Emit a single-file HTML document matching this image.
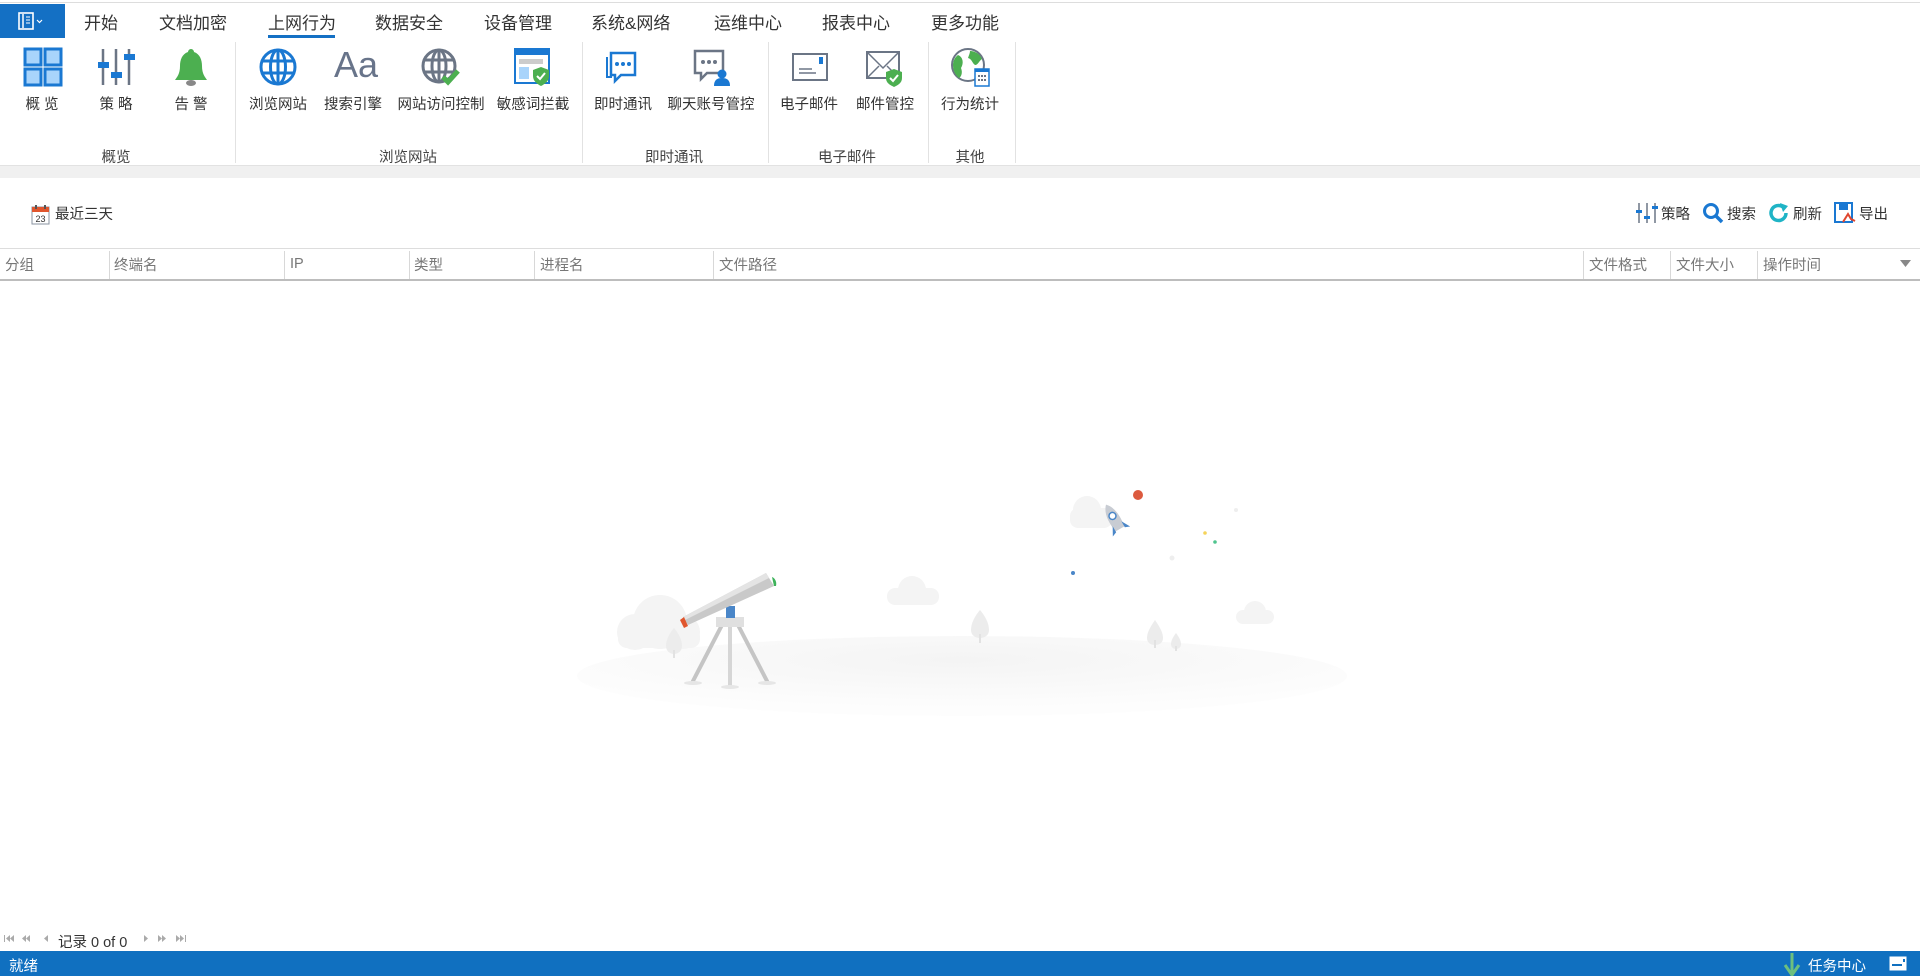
<!DOCTYPE html>
<html><head><meta charset="utf-8"><style>
*{margin:0;padding:0;box-sizing:border-box}
body{width:1920px;height:976px;position:relative;overflow:hidden;background:#fff;font-family:"Liberation Sans","Noto Sans CJK SC",sans-serif;color:#333}
.a{position:absolute;white-space:nowrap}
.tab{position:absolute;top:9px;font-size:17px;color:#333}
.lbl{position:absolute;top:93px;font-size:14.5px;color:#333;transform:translateX(-50%)}
.grp{position:absolute;top:146px;font-size:14.5px;color:#444;transform:translateX(-50%)}
.ic{position:absolute;top:47px;width:40px;height:40px}
.sep{position:absolute;top:42px;width:1px;height:121px;background:#e2e2e2}
.hd{position:absolute;top:254px;font-size:14.5px;color:#777}
.cs{position:absolute;top:251px;width:1px;height:28px;background:#d8d8d8}
.tb{position:absolute;top:203px;font-size:14.5px;color:#333}
</style></head><body>
<div class="a" style="left:0;top:2px;width:1920px;height:1px;background:#ddd"></div>
<div class="a" style="left:0;top:4px;width:65px;height:34px;background:#1470c4"></div>
<svg class="a" style="left:18px;top:12px" width="30" height="18"><rect x="1" y="1" width="14" height="16" fill="none" stroke="#fff" stroke-width="1.6"/><line x1="5" y1="2" x2="5" y2="16" stroke="#fff" stroke-width="1.5"/><line x1="8" y1="5" x2="12" y2="5" stroke="#fff"/><line x1="8" y1="8" x2="12" y2="8" stroke="#fff"/><line x1="8" y1="11" x2="12" y2="11" stroke="#fff"/><path d="M19 8l2.5 2.5L24 8" fill="none" stroke="#fff" stroke-width="1.2"/></svg>
<div class="tab" style="left:84px">开始</div>
<div class="tab" style="left:159px">文档加密</div>
<div class="tab" style="left:268px">上网行为</div>
<div class="a" style="left:268px;top:35px;width:67px;height:3px;background:#1470c4"></div>
<div class="tab" style="left:375px">数据安全</div>
<div class="tab" style="left:484px">设备管理</div>
<div class="tab" style="left:591px">系统&amp;网络</div>
<div class="tab" style="left:714px">运维中心</div>
<div class="tab" style="left:822px">报表中心</div>
<div class="tab" style="left:931px">更多功能</div>

<svg class="ic" style="left:23px" viewBox="0 0 40 40"><g fill="#a9d4fb" stroke="#1a78d2" stroke-width="3"><rect x="2" y="2" width="16" height="16"/><rect x="22" y="2" width="16" height="16"/><rect x="2" y="22" width="16" height="16"/><rect x="22" y="22" width="16" height="16"/></g></svg>
<svg class="ic" style="left:97px" viewBox="0 0 40 40"><g stroke="#6b7585" stroke-width="2.5"><line x1="6" y1="2" x2="6" y2="38"/><line x1="19" y1="2" x2="19" y2="38"/><line x1="32" y1="2" x2="32" y2="38"/></g><g fill="#1a78d2"><rect x="1" y="15" width="11" height="6"/><rect x="14" y="25" width="11" height="6"/><rect x="27" y="7" width="11" height="6"/></g></svg>
<svg class="ic" style="left:171px" viewBox="0 0 40 40"><path d="M20 2c-2 0-3 2-3 3-6 2-8 8-8 14 0 8-3 11-5 14h32c-2-3-5-6-5-14 0-6-2-12-8-14 0-1-1-3-3-3z" fill="#4caf50"/><ellipse cx="20" cy="36" rx="5" ry="3" fill="#888"/></svg>
<svg class="ic" style="left:258px" viewBox="0 0 40 40"><g fill="none" stroke="#1a78d2" stroke-width="3"><circle cx="20" cy="20" r="17"/><ellipse cx="20" cy="20" rx="7.5" ry="17"/><line x1="3" y1="14" x2="37" y2="14"/><line x1="3" y1="26" x2="37" y2="26"/><line x1="20" y1="3" x2="20" y2="37"/></g></svg>
<div class="a" style="left:334px;top:44px;font-size:36px;color:#68748a;font-family:'Liberation Sans',sans-serif">Aa</div>
<svg class="ic" style="left:420px" viewBox="0 0 40 40"><g fill="none" stroke="#6b7585" stroke-width="3"><circle cx="19" cy="19" r="16"/><ellipse cx="19" cy="19" rx="7" ry="16"/><line x1="3" y1="13" x2="35" y2="13"/><line x1="3" y1="25" x2="35" y2="25"/><line x1="19" y1="3" x2="19" y2="35"/></g><path d="M23 30l5 5 10-11" fill="none" stroke="#4caf50" stroke-width="5"/></svg>
<svg class="ic" style="left:513px" viewBox="0 0 40 40"><rect x="2" y="2" width="34" height="34" fill="#fff" stroke="#1a78d2" stroke-width="2"/><rect x="2" y="2" width="34" height="6" fill="#1a78d2"/><rect x="6" y="12" width="24" height="5" fill="#ccc"/><rect x="6" y="20" width="10" height="12" fill="#a9d4fb"/><path d="M28 20l8 3v6c0 5-4 8-8 10-4-2-8-5-8-10v-6z" fill="#4caf50"/><path d="M24 29l3 3 5-6" fill="none" stroke="#fff" stroke-width="2"/></svg>
<svg class="ic" style="left:603px" viewBox="0 0 40 40"><path d="M8 6h24v22H18l-6 6v-6H8z" fill="none" stroke="#1a78d2" stroke-width="2.5"/><path d="M4 10v20h5" fill="none" stroke="#1a78d2" stroke-width="2"/><circle cx="14" cy="17" r="2" fill="#1a78d2"/><circle cx="20" cy="17" r="2" fill="#1a78d2"/><circle cx="26" cy="17" r="2" fill="#1a78d2"/></svg>
<svg class="ic" style="left:691px" viewBox="0 0 40 40"><path d="M4 4h28v22H16l-6 6v-6H4z" fill="none" stroke="#6b7585" stroke-width="2.5"/><circle cx="12" cy="15" r="2" fill="#6b7585"/><circle cx="18" cy="15" r="2" fill="#6b7585"/><circle cx="24" cy="15" r="2" fill="#6b7585"/><circle cx="31" cy="27" r="4.5" fill="#1a78d2"/><path d="M23 39c0-6 3-8 8-8s8 2 8 8z" fill="#1a78d2"/></svg>
<svg class="ic" style="left:790px" viewBox="0 0 40 40"><rect x="3" y="7" width="34" height="26" fill="#fff" stroke="#6b7585" stroke-width="2"/><rect x="29" y="10" width="4" height="7" fill="#1a78d2"/><line x1="9" y1="22" x2="22" y2="22" stroke="#6b7585" stroke-width="1.5"/><line x1="9" y1="26" x2="26" y2="26" stroke="#6b7585" stroke-width="1.5"/></svg>
<svg class="ic" style="left:864px" viewBox="0 0 40 40"><rect x="3" y="5" width="32" height="26" fill="#fff" stroke="#6b7585" stroke-width="2"/><path d="M3 5l16 16L35 5M3 31l12-12M35 31L23 19" fill="none" stroke="#6b7585" stroke-width="1.5"/><path d="M30 22l8 3v6c0 5-4 7-8 9-4-2-8-4-8-9v-6z" fill="#4caf50"/><path d="M26 31l3 3 5-6" fill="none" stroke="#fff" stroke-width="2"/></svg>
<svg class="ic" style="left:950px" viewBox="0 0 40 40"><circle cx="18" cy="18" r="16" fill="#fff" stroke="#6b7585" stroke-width="2"/><path d="M8 8c5 2 6 8 3 13 2 5 0 9-2 10-4-3-6-8-6-13 0-4 2-8 5-10zM20 4c5 0 10 3 12 8-3 2-4 6-7 6-3-2-3-6-7-7 1-3 2-5 2-7z" fill="#4caf50"/><rect x="25" y="22" width="14" height="17" fill="#fff" stroke="#1a78d2" stroke-width="1.5"/><rect x="25" y="22" width="14" height="3" fill="#1a78d2"/><g fill="#6b7585"><rect x="28" y="28" width="2" height="2"/><rect x="31" y="28" width="2" height="2"/><rect x="34" y="28" width="2" height="2"/><rect x="28" y="32" width="2" height="2"/><rect x="31" y="32" width="2" height="2"/><rect x="34" y="32" width="2" height="2"/></g></svg>

<div class="lbl" style="left:42px">概 览</div>
<div class="lbl" style="left:116px">策 略</div>
<div class="lbl" style="left:191px">告 警</div>
<div class="lbl" style="left:278px">浏览网站</div>
<div class="lbl" style="left:353px">搜索引擎</div>
<div class="lbl" style="left:441px">网站访问控制</div>
<div class="lbl" style="left:533px">敏感词拦截</div>
<div class="lbl" style="left:623px">即时通讯</div>
<div class="lbl" style="left:711px">聊天账号管控</div>
<div class="lbl" style="left:809px">电子邮件</div>
<div class="lbl" style="left:885px">邮件管控</div>
<div class="lbl" style="left:970px">行为统计</div>

<div class="grp" style="left:116px">概览</div>
<div class="grp" style="left:408px">浏览网站</div>
<div class="grp" style="left:674px">即时通讯</div>
<div class="grp" style="left:847px">电子邮件</div>
<div class="grp" style="left:970px">其他</div>
<div class="sep" style="left:235px"></div><div class="sep" style="left:582px"></div><div class="sep" style="left:768px"></div><div class="sep" style="left:928px"></div><div class="sep" style="left:1015px"></div>
<div class="a" style="left:0;top:165px;width:1920px;height:13px;background:#f0f0f0;border-top:1px solid #e2e2e2"></div>

<svg class="a" style="left:31px;top:204px" width="19" height="21"><rect x="1" y="3" width="17" height="17" fill="#fff" stroke="#8a93a0"/><rect x="1" y="3" width="17" height="5" fill="#e0562e"/><rect x="4" y="1" width="2" height="4" fill="#555"/><rect x="13" y="1" width="2" height="4" fill="#555"/><text x="9.5" y="18" font-size="9" text-anchor="middle" fill="#333" font-family="Liberation Sans">23</text></svg>
<div class="tb" style="left:55px">最近三天</div>
<svg class="a" style="left:1636px;top:202px" width="22" height="22"><g stroke="#6b7585" stroke-width="1.5"><line x1="3" y1="1" x2="3" y2="21"/><line x1="11" y1="1" x2="11" y2="21"/><line x1="19" y1="1" x2="19" y2="21"/></g><g fill="#1a78d2"><rect x="0" y="8" width="6" height="3"/><rect x="8" y="14" width="6" height="3"/><rect x="16" y="4" width="6" height="3"/></g></svg>
<div class="tb" style="left:1661px">策略</div>
<svg class="a" style="left:1702px;top:202px" width="22" height="22"><circle cx="9" cy="9" r="6.5" fill="none" stroke="#1a78d2" stroke-width="3"/><line x1="14" y1="14" x2="20" y2="20" stroke="#1a78d2" stroke-width="3.5"/></svg>
<div class="tb" style="left:1727px">搜索</div>
<svg class="a" style="left:1768px;top:202px" width="22" height="22"><path d="M18 11a7.5 7.5 0 1 1-3-6" fill="none" stroke="#1fb4c6" stroke-width="3.5"/><path d="M12 1l8 3-5 6z" fill="#1fb4c6"/></svg>
<div class="tb" style="left:1793px">刷新</div>
<svg class="a" style="left:1834px;top:202px" width="22" height="22"><rect x="1" y="1" width="17" height="19" fill="#fff" stroke="#1a78d2" stroke-width="2"/><rect x="5" y="2" width="9" height="6" fill="#1a78d2"/><path d="M9 20l5-8 3 5 4 2" fill="none" stroke="#e0462e" stroke-width="2"/></svg>
<div class="tb" style="left:1859px">导出</div>

<div class="a" style="left:0;top:248px;width:1920px;height:1px;background:#ddd"></div>
<div class="a" style="left:0;top:279px;width:1920px;height:2px;background:#bdbdbd"></div>
<div class="hd" style="left:5px">分组</div>
<div class="cs" style="left:109px"></div><div class="hd" style="left:114px">终端名</div>
<div class="cs" style="left:284px"></div><div class="hd" style="left:290px;top:256px">IP</div>
<div class="cs" style="left:409px"></div><div class="hd" style="left:414px">类型</div>
<div class="cs" style="left:534px"></div><div class="hd" style="left:540px">进程名</div>
<div class="cs" style="left:713px"></div><div class="hd" style="left:719px">文件路径</div>
<div class="cs" style="left:1583px"></div><div class="hd" style="left:1589px">文件格式</div>
<div class="cs" style="left:1670px"></div><div class="hd" style="left:1676px">文件大小</div>
<div class="cs" style="left:1757px"></div><div class="hd" style="left:1763px">操作时间</div>
<svg class="a" style="left:1900px;top:260px" width="11" height="8"><path d="M0 0h11L5.5 7z" fill="#888"/></svg>

<svg class="a" style="left:560px;top:480px" width="800" height="240" viewBox="560 480 800 240">
<defs><radialGradient id="g" cx="50%" cy="30%" r="60%"><stop offset="0" stop-color="#f4f4f4"/><stop offset="1" stop-color="#fdfdfd"/></radialGradient></defs>
<ellipse cx="962" cy="676" rx="385" ry="40" fill="url(#g)"/>
<g fill="#f4f4f4"><circle cx="660" cy="622" r="27"/><circle cx="635" cy="632" r="18"/><circle cx="683" cy="632" r="17"/><rect x="618" y="628" width="82" height="20" rx="9"/>
<circle cx="912" cy="590" r="14"/><rect x="887" y="588" width="52" height="17" rx="8"/>
<circle cx="1255" cy="612" r="11"/><rect x="1236" y="610" width="38" height="14" rx="7"/>
<circle cx="1087" cy="510" r="14"/><rect x="1070" y="508" width="42" height="20" rx="8"/></g>
<g fill="#ececec"><path d="M674 628c-5 6-8 12-8 18 0 5 4 8 8 8s8-3 8-8c0-6-3-12-8-18z"/><path d="M980 610c-5 6-9 13-9 20 0 5 4 8 9 8s9-3 9-8c0-7-4-14-9-20z"/><path d="M1155 620c-4 6-8 12-8 18 0 5 4 7 8 7s8-2 8-7c0-6-4-12-8-18z"/><path d="M1176 633c-3 4-5 8-5 11 0 3 2 5 5 5s5-2 5-5c0-3-2-7-5-11z"/></g>
<g stroke="#e2e2e2" stroke-width="2"><line x1="674" y1="650" x2="674" y2="658"/><line x1="980" y1="634" x2="980" y2="643"/><line x1="1155" y1="640" x2="1155" y2="648"/><line x1="1176" y1="646" x2="1176" y2="651"/></g>
<g stroke="#c5c5c5" stroke-width="4" stroke-linecap="round"><line x1="722" y1="625" x2="693" y2="681"/><line x1="738" y1="625" x2="767" y2="681"/></g>
<line x1="730" y1="625" x2="730" y2="686" stroke="#d6d6d6" stroke-width="4"/>
<g fill="#e6e6e6"><ellipse cx="693" cy="683" rx="9" ry="2"/><ellipse cx="767" cy="683" rx="9" ry="2"/><ellipse cx="730" cy="687" rx="9" ry="2"/></g>
<rect x="716" y="617" width="28" height="10" fill="#e0e0e0"/>
<rect x="726" y="606" width="9" height="12" fill="#4a86c8"/>
<path d="M683 617l83-44 8 13-86 39z" fill="#c9c9c9"/>
<path d="M683 617l83-44 3 5-84 42z" fill="#e4e4e4"/>
<path d="M680 620l4-3 4 9-4 2z" fill="#e0562e"/>
<path d="M772 577c3 1 5 5 4 9l-2 0z" fill="#3db25a"/>
<circle cx="1138" cy="495" r="5" fill="#dc5a3e"/>
<g transform="rotate(-30 1116 522)"><path d="M1116 502c6 6 7 16 5 28h-10c-2-12-1-22 5-28z" fill="#c8ccd3"/><circle cx="1116" cy="515" r="3.5" fill="#fff" stroke="#4a86c8" stroke-width="1.5"/><path d="M1111 524l-5 9 5-2zM1121 524l5 9-5-2z" fill="#4a86c8"/></g>
<circle cx="1236" cy="510" r="2" fill="#eee"/><circle cx="1172" cy="558" r="2.5" fill="#eee"/><circle cx="1205" cy="533" r="1.8" fill="#f5d35a"/><circle cx="1215" cy="542" r="1.8" fill="#4fc48e"/><circle cx="1073" cy="573" r="2" fill="#4a86c8"/>
</svg>

<svg class="a" style="left:4px;top:934px" width="52" height="10"><g fill="#aaa"><rect x="0" y="1" width="1" height="7"/><path d="M6 1L2 4.5 6 8zM10 1L6 4.5 10 8z"/><path d="M22 1L18 4.5 22 8zM26 1L22 4.5 26 8z"/><path d="M44 1L40 4.5 44 8z"/></g></svg>
<div class="a" style="left:58px;top:931px;font-size:14.5px;color:#333">记录 0 of 0</div>
<svg class="a" style="left:142px;top:934px" width="50" height="10"><g fill="#aaa"><path d="M2 1L6 4.5 2 8z"/><path d="M16 1L20 4.5 16 8zM20 1L24 4.5 20 8z"/><path d="M34 1L38 4.5 34 8zM38 1L42 4.5 38 8z"/><rect x="43" y="1" width="1" height="7"/></g></svg>

<div class="a" style="left:0;top:951px;width:1920px;height:25px;background:#1070c0"></div>
<div class="a" style="left:9px;top:955px;font-size:14.5px;color:#fff">就绪</div>
<svg class="a" style="left:1783px;top:953px" width="18" height="23"><line x1="9" y1="0" x2="9" y2="20" stroke="#6dbf7e" stroke-width="3"/><path d="M2 12l7 10 7-10" fill="none" stroke="#6dbf7e" stroke-width="3"/></svg>
<div class="a" style="left:1808px;top:955px;font-size:14.5px;color:#fff">任务中心</div>
<svg class="a" style="left:1889px;top:956px" width="18" height="15"><rect x="0.5" y="0.5" width="17" height="14" fill="#fff"/><rect x="3" y="8" width="10" height="2" fill="#1070c0"/><rect x="14" y="3" width="2" height="3" fill="#1070c0"/></svg>
</body></html>
